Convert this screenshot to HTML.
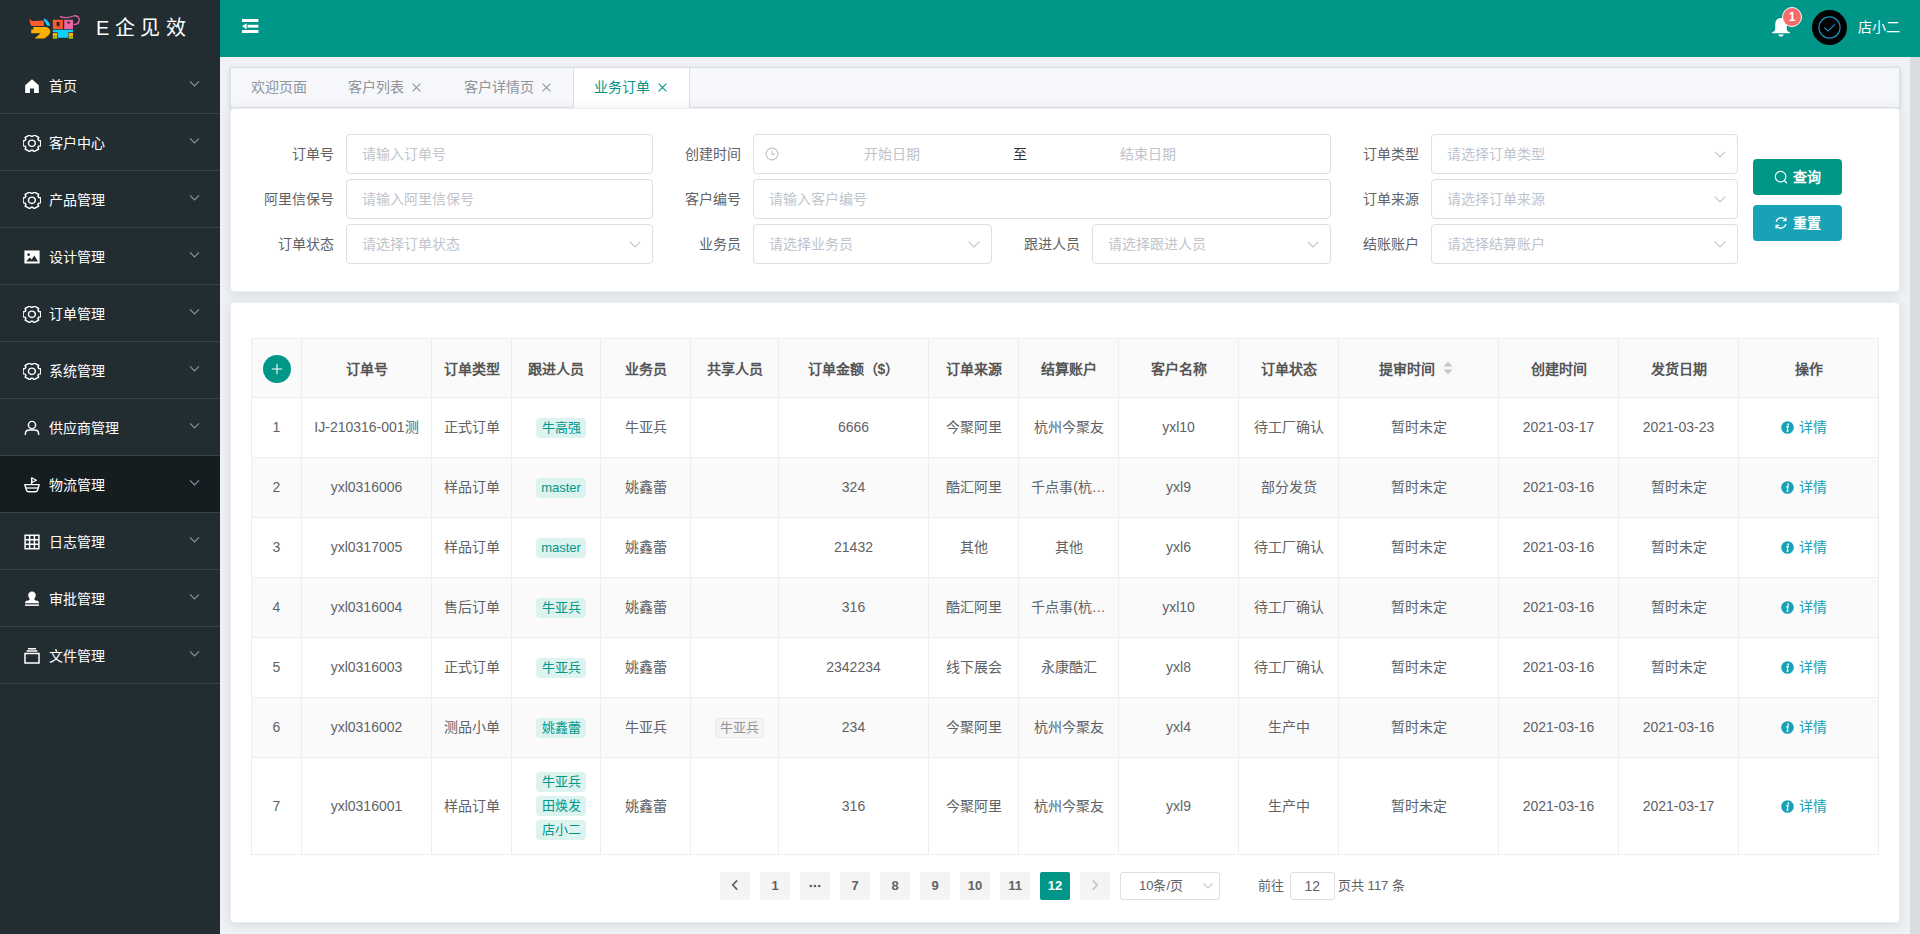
<!DOCTYPE html>
<html lang="zh-CN">
<head>
<meta charset="utf-8">
<title>E企见效</title>
<style>
*{box-sizing:border-box;margin:0;padding:0}
html,body{width:1920px;height:934px;overflow:hidden}
body{font-family:"Liberation Sans",sans-serif;font-size:14px;color:#606266;background:#eff2f5;position:relative}
.abs{position:absolute}
/* sidebar */
#side{position:absolute;left:0;top:0;width:220px;height:934px;background:#222d32}
#logo{position:absolute;left:0;top:0;width:220px;height:57px}
#title{position:absolute;left:96px;top:14px;height:28px;line-height:28px;font-size:20px;color:#fff;letter-spacing:5.4px;white-space:nowrap;font-family:"Liberation Serif",serif}
#title b{font-weight:normal;font-family:"Liberation Sans",sans-serif}
.mi{position:absolute;left:0;width:220px;height:57px;border-bottom:1px solid #3a454a;color:#fff;font-size:14px}
.mi.on{background:#161d21}
.mi span{position:absolute;left:49px;top:0;line-height:58px;white-space:nowrap}
.mi svg.ic{position:absolute;left:24px;top:21px;width:16px;height:16px}
.mi svg.ar{position:absolute;left:189px;top:23px;width:11px;height:8px}
/* header */
#hd{position:absolute;left:220px;top:0;width:1700px;height:57px;background:#009688}
/* scrollbar */
#sb{position:absolute;left:1910px;top:57px;width:10px;height:877px;background:#d9dde0}
/* tabs */
#tabs{position:absolute;left:230px;top:67px;width:1670px;height:41px;background:#f5f7fa;border:1px solid #dcdfe6;box-shadow:0 2px 4px 0 rgba(0,0,0,.12),0 0 6px 0 rgba(0,0,0,.04)}
#tabs .hl{position:absolute;left:0;top:39px;width:1668px;height:1px;background:#e4e7ed}
.tb{position:absolute;top:0;height:39px;line-height:39px;font-size:14px;color:#909399;white-space:nowrap}
.tb.on{color:#009688;background:#fff;border-left:1px solid #dcdfe6;border-right:1px solid #dcdfe6;height:40px}
.tb svg{position:absolute;top:15px;width:9px;height:9px}
/* cards */
.card{position:absolute;left:230px;width:1670px;background:#fff;border:1px solid #ebeef5;border-radius:4px;box-shadow:0 2px 12px 0 rgba(0,0,0,.1)}

/* form */
.lb{position:absolute;height:40px;line-height:40px;font-size:14px;color:#606266;text-align:right;white-space:nowrap;width:120px}
.in{position:absolute;height:40px;border:1px solid #dcdfe6;border-radius:4px;background:#fff;line-height:38px;padding-left:15px;font-size:14px;color:#c0c4cc;white-space:nowrap}
.in svg.sa{position:absolute;right:11px;top:16px;width:12px;height:7px}
.btn{position:absolute;width:89px;height:36px;border-radius:4px;color:#fff;font-size:14px;font-weight:bold;line-height:36px;white-space:nowrap}
.btn span{position:absolute;left:40px;top:0}
.btn svg{position:absolute;left:21px;top:11px;width:14px;height:14px}

/* table */
#tb{position:absolute;left:20px;top:35px;width:1628px;border-collapse:separate;border-spacing:0;table-layout:fixed;border-left:1px solid #ebeef5;border-top:1px solid #ebeef5;font-size:14px;color:#606266}
#tb th,#tb td{border-right:1px solid #ebeef5;border-bottom:1px solid #ebeef5;text-align:center;vertical-align:middle;padding:0 10px;white-space:nowrap;overflow:hidden;line-height:24px}
#tb th{height:59px;background:#fafafa;color:#555;font-weight:bold;padding-top:2px}
#tb td{height:60px;background:#fff;padding-bottom:1px}
#tb tr.s td{background:#fafafa}
#tb tr.l td{height:97px;padding-bottom:0}
#tb tr.l .tg{position:relative;top:-1px}
.tg{display:inline-block;height:20px;line-height:20px;padding:0 5.5px;border-radius:4px;background:#dcf3f0;color:#009688;font-size:13px;margin-left:10px;vertical-align:middle}
.tg.g{background:#f4f4f5;color:#909399;border:1px solid #e9e9eb;line-height:18px;padding:0 4px}
.dt{display:inline-block;color:#17a2b8;margin-right:10px;white-space:nowrap}
.dt svg{width:13px;height:13px;vertical-align:-2px;margin-right:5px}
.plus{display:inline-block;width:28px;height:28px;border-radius:14px;background:#009688;vertical-align:middle;position:relative}
/* pagination */
.pg{position:absolute;top:569px;width:30px;height:28px;border-radius:2px;background:#f4f4f5;color:#606266;font-size:13px;font-weight:bold;line-height:28px;text-align:center}
.pg.on{background:#009688;color:#fff}
.pt{position:absolute;top:569px;height:28px;line-height:28px;font-size:13px;color:#606266;white-space:nowrap}
</style>
</head>
<body>

<div id="side">
  <div id="logo">
    <svg class="abs" style="left:28px;top:13px" width="54" height="28" viewBox="28 13 54 28">
      <path d="M29.6 18.2 C30.6 20.4 32 21.4 34 21 L43.6 20.6 L44 26 L31.6 26 C30 24 29.4 21 29.6 18.2Z" fill="#ff5a2c"/>
      <path d="M43.9 18.2 C47.6 20 49.4 22.6 50.2 26 L47 25.6 C46 23 44.6 21.6 43.8 20.2Z" fill="#10d1fb"/>
      <path d="M33.4 27 L46 27 C49 27.6 50.4 29.6 50.4 32 C50 34.6 47 36.6 44.4 38.6 L34.6 38.6 L40.6 33.2 L31.2 33.2 L31.2 29.4 L33.4 29.4Z" fill="#ffae02"/>
      <path d="M52.8 19.8H62.9V28.9H52.8Z M56.6 21.9V26.2H59.6V21.9Z" fill="#ff5a2c" fill-rule="evenodd"/>
      <path d="M64.2 19.8H73V28.9H64.2Z M66.8 21.8 L70.4 21.8 L68.6 24.2Z" fill="#ef64a6" fill-rule="evenodd"/>
      <path d="M60.4 16.6 C64 18.4 69 17.6 73.6 16 C77 15 79.6 17.4 79.2 20.4 C78.8 23 76.6 24.6 74 24.4" fill="none" stroke="#ef64a6" stroke-width="1.3" stroke-linecap="round"/>
      <path d="M52.8 29.7H73V32.2H68.2V37.8H57.6V32.2H52.8Z" fill="#10d1fb"/>
      <rect x="52.8" y="33" width="4.3" height="3.4" fill="#ffae02"/>
      <rect x="68.6" y="33" width="4.4" height="3.4" fill="#ffae02"/>
      <rect x="52.8" y="36.4" width="4.3" height="2.3" fill="#a6c613"/>
      <rect x="68.6" y="36.4" width="4.4" height="2.3" fill="#a6c613"/>
    </svg>
    <div id="title"><b>E</b>企见效</div>
  </div>
  <div class="mi" style="top:57px"><svg class="ic" viewBox="0 0 16 16"><path d="M8 1.2 L1.2 7.2 V15 H6 V10.4 H10 V15 H14.8 V7.2Z" fill="#fff"/></svg><span>首页</span><svg class="ar" viewBox="0 0 11 8"><path d="M1 1.4 L5.5 5.9 L10 1.4" fill="none" stroke="#8a949a" stroke-width="1.1"/></svg></div>
  <div class="mi" style="top:114px"><svg class="ic" style="left:23.1px;width:17.8px;height:16.6px" preserveAspectRatio="none" viewBox="0 0 16 16"><path d="M15.94 5.57 L15.94 10.43 L14.12 10.73 L13.42 11.94 L14.07 13.66 L9.87 16.09 L8.70 14.66 L7.30 14.66 L6.13 16.09 L1.93 13.66 L2.58 11.94 L1.88 10.73 L0.06 10.43 L0.06 5.57 L1.88 5.27 L2.58 4.06 L1.93 2.34 L6.13 -0.09 L7.30 1.34 L8.70 1.34 L9.87 -0.09 L14.07 2.34 L13.42 4.06 L14.12 5.27Z" fill="none" stroke="#fff" stroke-width="1.35" stroke-linejoin="round"/><circle cx="8" cy="8" r="3.1" fill="none" stroke="#fff" stroke-width="1.35"/></svg><span>客户中心</span><svg class="ar" viewBox="0 0 11 8"><path d="M1 1.4 L5.5 5.9 L10 1.4" fill="none" stroke="#8a949a" stroke-width="1.1"/></svg></div>
  <div class="mi" style="top:171px"><svg class="ic" style="left:23.1px;width:17.8px;height:16.6px" preserveAspectRatio="none" viewBox="0 0 16 16"><path d="M15.94 5.57 L15.94 10.43 L14.12 10.73 L13.42 11.94 L14.07 13.66 L9.87 16.09 L8.70 14.66 L7.30 14.66 L6.13 16.09 L1.93 13.66 L2.58 11.94 L1.88 10.73 L0.06 10.43 L0.06 5.57 L1.88 5.27 L2.58 4.06 L1.93 2.34 L6.13 -0.09 L7.30 1.34 L8.70 1.34 L9.87 -0.09 L14.07 2.34 L13.42 4.06 L14.12 5.27Z" fill="none" stroke="#fff" stroke-width="1.35" stroke-linejoin="round"/><circle cx="8" cy="8" r="3.1" fill="none" stroke="#fff" stroke-width="1.35"/></svg><span>产品管理</span><svg class="ar" viewBox="0 0 11 8"><path d="M1 1.4 L5.5 5.9 L10 1.4" fill="none" stroke="#8a949a" stroke-width="1.1"/></svg></div>
  <div class="mi" style="top:228px"><svg class="ic" viewBox="0 0 16 16"><path d="M0.4 1.6H15.6V14.4H0.4Z M2.2 12.4 H14 L10.4 6.4 L7.6 10.6 L5.6 8.6Z M4.6 4.2 a1.4 1.4 0 1 0 0.01 0Z" fill="#fff" fill-rule="evenodd"/></svg><span>设计管理</span><svg class="ar" viewBox="0 0 11 8"><path d="M1 1.4 L5.5 5.9 L10 1.4" fill="none" stroke="#8a949a" stroke-width="1.1"/></svg></div>
  <div class="mi" style="top:285px"><svg class="ic" style="left:23.1px;width:17.8px;height:16.6px" preserveAspectRatio="none" viewBox="0 0 16 16"><path d="M15.94 5.57 L15.94 10.43 L14.12 10.73 L13.42 11.94 L14.07 13.66 L9.87 16.09 L8.70 14.66 L7.30 14.66 L6.13 16.09 L1.93 13.66 L2.58 11.94 L1.88 10.73 L0.06 10.43 L0.06 5.57 L1.88 5.27 L2.58 4.06 L1.93 2.34 L6.13 -0.09 L7.30 1.34 L8.70 1.34 L9.87 -0.09 L14.07 2.34 L13.42 4.06 L14.12 5.27Z" fill="none" stroke="#fff" stroke-width="1.35" stroke-linejoin="round"/><circle cx="8" cy="8" r="3.1" fill="none" stroke="#fff" stroke-width="1.35"/></svg><span>订单管理</span><svg class="ar" viewBox="0 0 11 8"><path d="M1 1.4 L5.5 5.9 L10 1.4" fill="none" stroke="#8a949a" stroke-width="1.1"/></svg></div>
  <div class="mi" style="top:342px"><svg class="ic" style="left:23.1px;width:17.8px;height:16.6px" preserveAspectRatio="none" viewBox="0 0 16 16"><path d="M15.94 5.57 L15.94 10.43 L14.12 10.73 L13.42 11.94 L14.07 13.66 L9.87 16.09 L8.70 14.66 L7.30 14.66 L6.13 16.09 L1.93 13.66 L2.58 11.94 L1.88 10.73 L0.06 10.43 L0.06 5.57 L1.88 5.27 L2.58 4.06 L1.93 2.34 L6.13 -0.09 L7.30 1.34 L8.70 1.34 L9.87 -0.09 L14.07 2.34 L13.42 4.06 L14.12 5.27Z" fill="none" stroke="#fff" stroke-width="1.35" stroke-linejoin="round"/><circle cx="8" cy="8" r="3.1" fill="none" stroke="#fff" stroke-width="1.35"/></svg><span>系统管理</span><svg class="ar" viewBox="0 0 11 8"><path d="M1 1.4 L5.5 5.9 L10 1.4" fill="none" stroke="#8a949a" stroke-width="1.1"/></svg></div>
  <div class="mi" style="top:399px"><svg class="ic" viewBox="0 0 16 16"><circle cx="8" cy="5" r="3.6" fill="none" stroke="#fff" stroke-width="1.4"/><path d="M1.4 15 V13.6 C1.4 11.2 3.4 10 5.4 10 H10.6 C12.6 10 14.6 11.2 14.6 13.6 V15" fill="none" stroke="#fff" stroke-width="1.4"/></svg><span>供应商管理</span><svg class="ar" viewBox="0 0 11 8"><path d="M1 1.4 L5.5 5.9 L10 1.4" fill="none" stroke="#8a949a" stroke-width="1.1"/></svg></div>
  <div class="mi on" style="top:456px"><svg class="ic" viewBox="0 0 16 16"><path d="M7.6 0.6 V7" stroke="#fff" stroke-width="1.3" fill="none"/><path d="M7.8 0.8 L12.4 3.2 L7.8 5.4Z" fill="none" stroke="#fff" stroke-width="1.1" stroke-linejoin="round"/><path d="M0.8 7.6 H15.2 L13.6 13 C13.2 14.2 12.4 14.8 11.2 14.8 H4.8 C3.6 14.8 2.8 14.2 2.4 13Z" fill="none" stroke="#fff" stroke-width="1.4" stroke-linejoin="round"/><path d="M1.8 11 H14.2" stroke="#fff" stroke-width="1.3"/></svg><span>物流管理</span><svg class="ar" viewBox="0 0 11 8"><path d="M1 1.4 L5.5 5.9 L10 1.4" fill="none" stroke="#8a949a" stroke-width="1.1"/></svg></div>
  <div class="mi" style="top:513px"><svg class="ic" viewBox="0 0 16 16"><path d="M1.1 1.2H14.9V14.8H1.1Z M5.6 1.2V14.8 M10.4 1.2V14.8 M1.1 5.7H14.9 M1.1 10.3H14.9" fill="none" stroke="#fff" stroke-width="1.5"/></svg><span>日志管理</span><svg class="ar" viewBox="0 0 11 8"><path d="M1 1.4 L5.5 5.9 L10 1.4" fill="none" stroke="#8a949a" stroke-width="1.1"/></svg></div>
  <div class="mi" style="top:570px"><svg class="ic" viewBox="0 0 16 16"><path d="M8 0.6 C10.4 0.6 11.8 2.4 11.8 4.2 C11.8 6 10.6 6.8 10.4 8 C10.3 8.8 10.8 9.4 12 9.6 C14 9.9 15 10.6 15 12.2 H1 C1 10.6 2 9.9 4 9.6 C5.2 9.4 5.7 8.8 5.6 8 C5.4 6.8 4.2 6 4.2 4.2 C4.2 2.4 5.6 0.6 8 0.6Z" fill="#fff"/><rect x="1" y="13.4" width="14" height="1.5" fill="#fff"/></svg><span>审批管理</span><svg class="ar" viewBox="0 0 11 8"><path d="M1 1.4 L5.5 5.9 L10 1.4" fill="none" stroke="#8a949a" stroke-width="1.1"/></svg></div>
  <div class="mi" style="top:627px"><svg class="ic" viewBox="0 0 16 16"><path d="M1 5.4H15V15H1Z" fill="none" stroke="#fff" stroke-width="1.5"/><path d="M2.6 3H13.4 M4 0.8H12" stroke="#fff" stroke-width="1.4" fill="none"/></svg><span>文件管理</span><svg class="ar" viewBox="0 0 11 8"><path d="M1 1.4 L5.5 5.9 L10 1.4" fill="none" stroke="#8a949a" stroke-width="1.1"/></svg></div>
</div>

<div id="hd">
  <!-- fold icon -->
  <svg class="abs" style="left:22px;top:19px" width="17" height="14" viewBox="0 0 17 14">
    <rect x="0" y="0" width="16.4" height="3" fill="#fff"/>
    <rect x="5.6" y="5.8" width="10.8" height="2.8" fill="#fff"/>
    <path d="M0 7.2 L4.6 4.2 V10.2Z" fill="#fff"/>
    <rect x="0" y="11" width="16.4" height="3" fill="#fff"/>
  </svg>
  <svg class="abs" style="left:1551px;top:17px" width="20" height="21" viewBox="0 0 20 21">
    <path d="M10 1 C6.2 1 4.2 3.8 4.2 7.4 V12.2 C4.2 13.6 3 14.6 1.2 15 V16.2 H18.8 V15 C17 14.6 15.8 13.6 15.8 12.2 V7.4 C15.8 3.8 13.8 1 10 1Z" fill="#fff"/>
    <path d="M7.4 17.4 H12.6 C12.4 18.8 11.4 19.6 10 19.6 C8.6 19.6 7.6 18.8 7.4 17.4Z" fill="#fff"/>
  </svg>
  <div class="abs" style="left:1562px;top:7px;width:20px;height:20px;border-radius:10px;background:#f56c6c;border:1px solid #fff;color:#fff;font-size:12px;font-weight:bold;line-height:18px;text-align:center">1</div>
  <svg class="abs" style="left:1592px;top:10px" width="35" height="35" viewBox="0 0 35 35">
    <circle cx="17.5" cy="17.5" r="17.5" fill="#000"/>
    <circle cx="17.5" cy="17.5" r="10.6" fill="none" stroke="#1c93c4" stroke-width="1.1"/>
    <path d="M12.4 17.6 L16 21 L23 14.4" fill="none" stroke="#1c93c4" stroke-width="1.1"/>
  </svg>
  <div class="abs" style="left:1638px;top:17px;line-height:20px;color:#fff;font-size:14px;white-space:nowrap">店小二</div>
</div>

<div id="sb"></div>

<div id="tabs">
  <div class="hl"></div>
  <div class="tb" style="left:20px">欢迎页面</div>
  <div class="tb" style="left:117px">客户列表<svg style="left:64px" viewBox="0 0 9 9"><path d="M0.6 0.6 L8.4 8.4 M8.4 0.6 L0.6 8.4" stroke="#909399" stroke-width="1.1" fill="none"/></svg></div>
  <div class="tb" style="left:233px">客户详情页<svg style="left:78px" viewBox="0 0 9 9"><path d="M0.6 0.6 L8.4 8.4 M8.4 0.6 L0.6 8.4" stroke="#909399" stroke-width="1.1" fill="none"/></svg></div>
  <div class="tb on" style="left:342px;width:117px;padding-left:20px">业务订单<svg style="left:84px" viewBox="0 0 9 9"><path d="M0.6 0.6 L8.4 8.4 M8.4 0.6 L0.6 8.4" stroke="#009688" stroke-width="1.1" fill="none"/></svg></div>
</div>

<div class="card" style="top:108px;height:184px">
  <div class="lb" style="left:-17px;top:25px">订单号</div>
  <div class="in" style="left:115px;top:25px;width:307px">请输入订单号</div>
  <div class="lb" style="left:-17px;top:70px">阿里信保号</div>
  <div class="in" style="left:115px;top:70px;width:307px">请输入阿里信保号</div>
  <div class="lb" style="left:-17px;top:115px">订单状态</div>
  <div class="in" style="left:115px;top:115px;width:307px">请选择订单状态<svg class="sa" viewBox="0 0 12 7"><path d="M0.7 0.7 L6 6 L11.3 0.7" fill="none" stroke="#c0c4cc" stroke-width="1.1"/></svg></div>
  <div class="lb" style="left:390px;top:25px">创建时间</div>
  <div class="in" style="left:522px;top:25px;width:578px;padding:0"><svg class="abs" style="left:11px;top:12px" width="14" height="14" viewBox="0 0 14 14"><circle cx="7" cy="7" r="5.9" fill="none" stroke="#c0c4cc" stroke-width="1.1"/><path d="M7 3.6 V7.4 H10" fill="none" stroke="#c0c4cc" stroke-width="1.1"/></svg><span class="abs" style="left:82px;width:112px;text-align:center">开始日期</span><span class="abs" style="left:251px;width:30px;text-align:center;color:#303133">至</span><span class="abs" style="left:338px;width:112px;text-align:center">结束日期</span></div>
  <div class="lb" style="left:390px;top:70px">客户编号</div>
  <div class="in" style="left:522px;top:70px;width:578px">请输入客户编号</div>
  <div class="lb" style="left:390px;top:115px">业务员</div>
  <div class="in" style="left:522px;top:115px;width:239px">请选择业务员<svg class="sa" viewBox="0 0 12 7"><path d="M0.7 0.7 L6 6 L11.3 0.7" fill="none" stroke="#c0c4cc" stroke-width="1.1"/></svg></div>
  <div class="lb" style="left:729px;top:115px">跟进人员</div>
  <div class="in" style="left:861px;top:115px;width:239px">请选择跟进人员<svg class="sa" viewBox="0 0 12 7"><path d="M0.7 0.7 L6 6 L11.3 0.7" fill="none" stroke="#c0c4cc" stroke-width="1.1"/></svg></div>
  <div class="lb" style="left:1068px;top:25px">订单类型</div>
  <div class="in" style="left:1200px;top:25px;width:307px">请选择订单类型<svg class="sa" viewBox="0 0 12 7"><path d="M0.7 0.7 L6 6 L11.3 0.7" fill="none" stroke="#c0c4cc" stroke-width="1.1"/></svg></div>
  <div class="lb" style="left:1068px;top:70px">订单来源</div>
  <div class="in" style="left:1200px;top:70px;width:307px">请选择订单来源<svg class="sa" viewBox="0 0 12 7"><path d="M0.7 0.7 L6 6 L11.3 0.7" fill="none" stroke="#c0c4cc" stroke-width="1.1"/></svg></div>
  <div class="lb" style="left:1068px;top:115px">结账账户</div>
  <div class="in" style="left:1200px;top:115px;width:307px">请选择结算账户<svg class="sa" viewBox="0 0 12 7"><path d="M0.7 0.7 L6 6 L11.3 0.7" fill="none" stroke="#c0c4cc" stroke-width="1.1"/></svg></div>
  <div class="btn" style="left:1522px;top:50px;background:#009688"><svg viewBox="0 0 14 14"><circle cx="6.6" cy="6.6" r="5.3" fill="none" stroke="#fff" stroke-width="1.2"/><path d="M10.4 10.6 L12.6 12.8" stroke="#fff" stroke-width="1.3" stroke-linecap="round"/></svg><span>查询</span></div>
  <div class="btn" style="left:1522px;top:96px;background:#17a2b8"><svg viewBox="0 0 14 14"><path d="M2.2 6 A5 5 0 0 1 11.4 4.2 M11.8 8 A5 5 0 0 1 2.6 9.8" fill="none" stroke="#fff" stroke-width="1.3"/><path d="M11.9 1.6 V4.6 H8.9 M2.1 12.4 V9.4 H5.1" fill="none" stroke="#fff" stroke-width="1.3"/></svg><span>重置</span></div>
</div>

<div class="card" style="top:302px;height:621px">
<table id="tb"><colgroup><col style="width:50px"><col style="width:130px"><col style="width:80px"><col style="width:89px"><col style="width:90px"><col style="width:88px"><col style="width:150px"><col style="width:90px"><col style="width:100px"><col style="width:120px"><col style="width:100px"><col style="width:160px"><col style="width:120px"><col style="width:120px"><col style="width:140px"></colgroup>
<tr><th><span class="plus"><svg class="abs" style="left:8px;top:8px" width="12" height="12" viewBox="0 0 12 12"><path d="M6 0.8V11.2M0.8 6H11.2" stroke="#fff" stroke-width="1.1"/></svg></span></th><th>订单号</th><th>订单类型</th><th>跟进人员</th><th>业务员</th><th>共享人员</th><th>订单金额（$）</th><th>订单来源</th><th>结算账户</th><th>客户名称</th><th>订单状态</th><th>提审时间<svg style="width:10px;height:14px;margin-left:8px;margin-right:6px;vertical-align:-1px" viewBox="0 0 10 14"><path d="M5 0.6 L9.4 5.4 H0.6Z M5 13.4 L9.4 8.6 H0.6Z" fill="#c0c4cc"/></svg></th><th>创建时间</th><th>发货日期</th><th>操作</th></tr>
<tr><td>1</td><td>IJ-210316-001测</td><td>正式订单</td><td><span class="tg">牛高强</span></td><td>牛亚兵</td><td></td><td>6666</td><td>今聚阿里</td><td>杭州今聚友</td><td>yxl10</td><td>待工厂确认</td><td>暂时未定</td><td>2021-03-17</td><td>2021-03-23</td><td><span class="dt"><svg viewBox="0 0 13 13"><circle cx="6.5" cy="6.5" r="6.3" fill="#17a2b8"/><path d="M7.2 2.6 a0.9 0.9 0 1 0 0.01 0Z M5.2 5.4 H7.4 L6.4 9.6 H7.6 M5.2 5.4" fill="#fff" stroke="none"/><path d="M5.3 5.5 H7.1 L6.1 10.1 H7.5" fill="none" stroke="#fff" stroke-width="1.1"/></svg>详情</span></td></tr>
<tr class="s"><td>2</td><td>yxl0316006</td><td>样品订单</td><td><span class="tg">master</span></td><td>姚鑫蕾</td><td></td><td>324</td><td>酷汇阿里</td><td>千点事(杭…</td><td>yxl9</td><td>部分发货</td><td>暂时未定</td><td>2021-03-16</td><td>暂时未定</td><td><span class="dt"><svg viewBox="0 0 13 13"><circle cx="6.5" cy="6.5" r="6.3" fill="#17a2b8"/><path d="M7.2 2.6 a0.9 0.9 0 1 0 0.01 0Z M5.2 5.4 H7.4 L6.4 9.6 H7.6 M5.2 5.4" fill="#fff" stroke="none"/><path d="M5.3 5.5 H7.1 L6.1 10.1 H7.5" fill="none" stroke="#fff" stroke-width="1.1"/></svg>详情</span></td></tr>
<tr><td>3</td><td>yxl0317005</td><td>样品订单</td><td><span class="tg">master</span></td><td>姚鑫蕾</td><td></td><td>21432</td><td>其他</td><td>其他</td><td>yxl6</td><td>待工厂确认</td><td>暂时未定</td><td>2021-03-16</td><td>暂时未定</td><td><span class="dt"><svg viewBox="0 0 13 13"><circle cx="6.5" cy="6.5" r="6.3" fill="#17a2b8"/><path d="M7.2 2.6 a0.9 0.9 0 1 0 0.01 0Z M5.2 5.4 H7.4 L6.4 9.6 H7.6 M5.2 5.4" fill="#fff" stroke="none"/><path d="M5.3 5.5 H7.1 L6.1 10.1 H7.5" fill="none" stroke="#fff" stroke-width="1.1"/></svg>详情</span></td></tr>
<tr class="s"><td>4</td><td>yxl0316004</td><td>售后订单</td><td><span class="tg">牛亚兵</span></td><td>姚鑫蕾</td><td></td><td>316</td><td>酷汇阿里</td><td>千点事(杭…</td><td>yxl10</td><td>待工厂确认</td><td>暂时未定</td><td>2021-03-16</td><td>暂时未定</td><td><span class="dt"><svg viewBox="0 0 13 13"><circle cx="6.5" cy="6.5" r="6.3" fill="#17a2b8"/><path d="M7.2 2.6 a0.9 0.9 0 1 0 0.01 0Z M5.2 5.4 H7.4 L6.4 9.6 H7.6 M5.2 5.4" fill="#fff" stroke="none"/><path d="M5.3 5.5 H7.1 L6.1 10.1 H7.5" fill="none" stroke="#fff" stroke-width="1.1"/></svg>详情</span></td></tr>
<tr><td>5</td><td>yxl0316003</td><td>正式订单</td><td><span class="tg">牛亚兵</span></td><td>姚鑫蕾</td><td></td><td>2342234</td><td>线下展会</td><td>永康酷汇</td><td>yxl8</td><td>待工厂确认</td><td>暂时未定</td><td>2021-03-16</td><td>暂时未定</td><td><span class="dt"><svg viewBox="0 0 13 13"><circle cx="6.5" cy="6.5" r="6.3" fill="#17a2b8"/><path d="M7.2 2.6 a0.9 0.9 0 1 0 0.01 0Z M5.2 5.4 H7.4 L6.4 9.6 H7.6 M5.2 5.4" fill="#fff" stroke="none"/><path d="M5.3 5.5 H7.1 L6.1 10.1 H7.5" fill="none" stroke="#fff" stroke-width="1.1"/></svg>详情</span></td></tr>
<tr class="s"><td>6</td><td>yxl0316002</td><td>测品小单</td><td><span class="tg">姚鑫蕾</span></td><td>牛亚兵</td><td><span class="tg g">牛亚兵</span></td><td>234</td><td>今聚阿里</td><td>杭州今聚友</td><td>yxl4</td><td>生产中</td><td>暂时未定</td><td>2021-03-16</td><td>2021-03-16</td><td><span class="dt"><svg viewBox="0 0 13 13"><circle cx="6.5" cy="6.5" r="6.3" fill="#17a2b8"/><path d="M7.2 2.6 a0.9 0.9 0 1 0 0.01 0Z M5.2 5.4 H7.4 L6.4 9.6 H7.6 M5.2 5.4" fill="#fff" stroke="none"/><path d="M5.3 5.5 H7.1 L6.1 10.1 H7.5" fill="none" stroke="#fff" stroke-width="1.1"/></svg>详情</span></td></tr>
<tr class="l"><td>7</td><td>yxl0316001</td><td>样品订单</td><td><span class="tg">牛亚兵</span><br><span class="tg">田焕发</span><br><span class="tg">店小二</span></td><td>姚鑫蕾</td><td></td><td>316</td><td>今聚阿里</td><td>杭州今聚友</td><td>yxl9</td><td>生产中</td><td>暂时未定</td><td>2021-03-16</td><td>2021-03-17</td><td><span class="dt"><svg viewBox="0 0 13 13"><circle cx="6.5" cy="6.5" r="6.3" fill="#17a2b8"/><path d="M7.2 2.6 a0.9 0.9 0 1 0 0.01 0Z M5.2 5.4 H7.4 L6.4 9.6 H7.6 M5.2 5.4" fill="#fff" stroke="none"/><path d="M5.3 5.5 H7.1 L6.1 10.1 H7.5" fill="none" stroke="#fff" stroke-width="1.1"/></svg>详情</span></td></tr>
</table>
<div class="pg" style="left:489px"><svg width="8" height="12" viewBox="0 0 8 12" style="vertical-align:-1px"><path d="M6.2 1.4 L1.8 6 L6.2 10.6" fill="none" stroke="#606266" stroke-width="1.7"/></svg></div>
<div class="pg" style="left:529px">1</div>
<div class="pg" style="left:569px"><svg width="12" height="4" viewBox="0 0 12 4" style="vertical-align:2px"><circle cx="1.8" cy="2" r="1.35" fill="#606266"/><circle cx="6" cy="2" r="1.35" fill="#606266"/><circle cx="10.2" cy="2" r="1.35" fill="#606266"/></svg></div>
<div class="pg" style="left:609px">7</div>
<div class="pg" style="left:649px">8</div>
<div class="pg" style="left:689px">9</div>
<div class="pg" style="left:729px">10</div>
<div class="pg" style="left:769px">11</div>
<div class="pg on" style="left:809px">12</div>
<div class="pg" style="left:849px"><svg width="8" height="12" viewBox="0 0 8 12" style="vertical-align:-1px"><path d="M1.8 1.4 L6.2 6 L1.8 10.6" fill="none" stroke="#c0c4cc" stroke-width="1.7"/></svg></div>
<div class="pt" style="left:889px;width:100px;border:1px solid #dcdfe6;border-radius:3px;line-height:26px;padding-left:18px">10条/页<svg class="abs" style="left:82px;top:10px" width="10" height="6" viewBox="0 0 10 6"><path d="M0.6 0.6 L5 5 L9.4 0.6" fill="none" stroke="#c0c4cc" stroke-width="1.1"/></svg></div>
<div class="pt" style="left:1027px">前往</div>
<div class="pt" style="left:1058.5px;width:45.5px;border:1px solid #dcdfe6;border-radius:3px;line-height:26px;text-align:center;font-size:14px">12</div>
<div class="pt" style="left:1107px">页共 117 条</div>
</div>

</body>
</html>
